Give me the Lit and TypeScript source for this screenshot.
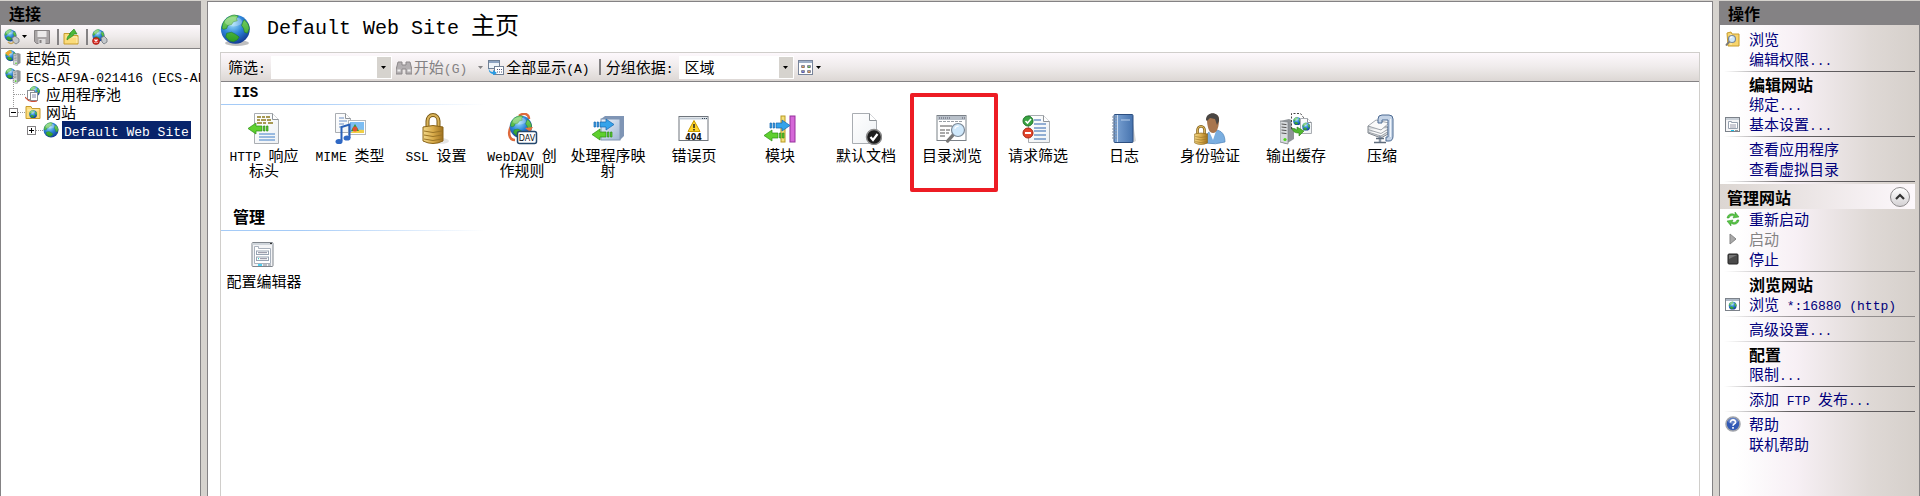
import { LitElement, html, svg, css, TemplateResult, SVGTemplateResult } from "lit";
import { customElement } from "lit/decorators.js";
import { classMap } from "lit/directives/class-map.js";

/** Wraps Latin runs so that they take the half-width face beside full-width characters. */
const mix = (text: string) =>
  text
    .split(/([\x20-\x7e]+)/)
    .filter((s) => s)
    .map((s) => (/^[\x20-\x7e]/.test(s) ? html`<span class="latin">${s}</span>` : s));

const globe = (x: number, y: number, s: number) => svg`
  <g transform="translate(${x} ${y}) scale(${s})">
    <circle cx="16" cy="16" r="15" fill="url(#sea)"/>
    <path d="M3 10C5 5 10 1.500 15 1l4 1-2 3 1 2-4 1-2 3-4 1-1 3-3 1-2-1zM25 6c3 2 5 5 5.500 9l-2 5-3-1-1-4-2-3 1-3zM7 20l5-1 4 2 4 3-2 3-4 2-4-1-4-4z" fill="url(#land)" stroke="#1d7a20" stroke-width=".6"/>
    <ellipse cx="14" cy="8" rx="9" ry="5" fill="#fff" opacity=".28"/>
  </g>`;

const padlock = (x: number, y: number, s: number) => svg`
  <g transform="translate(${x} ${y}) scale(${s})">
    <path d="M5.500 15V8a5.500 6 0 0 1 11 0v7" fill="none" stroke="#7a5a16" stroke-width="4"/>
    <path d="M5.500 15V8a5.500 6 0 0 1 11 0v7" fill="none" stroke="#d9b35a" stroke-width="2"/>
    <path d="M1 14q10-3 20 0v14q-10 5-20 0z" fill="url(#gold)" stroke="#8a6418"/>
    <path d="M2 18q9 3 18 0M2 22q9 3 18 0M2 26q9 3 18 0" fill="none" stroke="#9a7426"/>
  </g>`;

const arrowRight = (x: number, y: number) => svg`
  <path transform="translate(${x} ${y})" d="M0 3h1.500v5H0zM3 3h1.500v5H3zM6 3h6V0l8 5.500-8 5.500V8H6z" fill="#35a3ea" stroke="#1565b0" stroke-width=".7"/>`;
const arrowLeft = (x: number, y: number) => svg`
  <path transform="translate(${x} ${y})" d="M20 3h-1.500v5H20zM17 3h-1.500v5H17zM14 3H8V0L0 5.500 8 11V8h6z" fill="#5fd02f" stroke="#2c8f16" stroke-width=".7"/>`;

const server = (x: number, y: number, s: number) => svg`
  <g transform="translate(${x} ${y}) scale(${s})">
    <path d="M0 2l9-2 5 2v18l-8 5-6-2z" fill="#8f9498"/>
    <path d="M0 2l8 1v22l-8-2z" fill="#d8dbde" stroke="#7d8286" stroke-width=".7"/>
    <path d="M1.500 5l5 .6M1.500 8l5 .6M1.500 11l5 .6M1.500 14l5 .6" stroke="#555"/>
    <circle cx="5" cy="20.500" r="1.600" fill="#4fd51e"/>
  </g>`;

const magnifier = (x: number, y: number, r: number) => svg`
  <path d="M${x - r * 0.7} ${y + r * 0.7}l${-r * 0.9} ${r}" stroke="#777" stroke-width="${r * 0.5}" stroke-linecap="round"/>
  <circle cx="${x}" cy="${y}" r="${r}" fill="#cfe8fb" stroke="#7b8896" stroke-width="1.200"/>
  <path d="M${x - r * 0.5} ${y - r * 0.2}a${r * 0.6} ${r * 0.6} 0 0 1 ${r * 0.6} ${-r * 0.4}" fill="none" stroke="#fff" stroke-width="1.200"/>`;

const page = (x: number, y: number, w: number, h: number, f: number) => svg`
  <path d="M${x} ${y}h${w - f}l${f} ${f}v${h - f}h${-w}z" fill="url(#paper)" stroke="#a9adb2"/>
  <path d="M${x + w - f} ${y}v${f}h${f}" fill="#fff" stroke="#8f9499"/>`;

const icons: Record<string, SVGTemplateResult> = {
  http: svg`${page(6.5, 0.5, 24, 30, 6)}
    <path d="M9 4h4M14 4h3M18 4h4M9 7h3M13 7h5M19 7h4M9 10h5M15 10h3M20 10h5" stroke="#8d7a1c" stroke-width="1.500"/>
    <path d="M11 21h16M11 24h16M11 27h16" stroke="#3f7fc8"/>${arrowLeft(0, 10)}`,
  mime: svg`${page(1.5, 0.5, 15, 19, 5)}
    <path d="M5 5h5M5 8h8M5 11h5M5 14h4" stroke="#6d8fc4"/>
    <rect x="14.500" y="7.500" width="17" height="14" fill="#fff" stroke="#b4b8bc"/>
    <rect x="16" y="9" width="14" height="11" fill="#7dbdf2"/>
    <path d="M16 20c3-3 8-4 14-3v3z" fill="#f0cf46"/><path d="M17 18l4-7 4 7z" fill="#2d9a35"/><circle cx="21" cy="16" r="2.500" fill="#e05030"/>
    <path d="M7.500 28V14l8-2.500V25" fill="none" stroke="#2960b8" stroke-width="2"/>
    <ellipse cx="5" cy="28.500" rx="3.500" ry="2.600" fill="#2f68c4"/><ellipse cx="13" cy="25" rx="3.500" ry="2.600" fill="#2f68c4"/>`,
  ssl: svg`<ellipse cx="21" cy="28" rx="8" ry="3" fill="#000" opacity=".1"/>${padlock(2, 0, 1)}`,
  webdav: svg`<path d="M13 3c5-4 10-2 10 3M6 12c-5 7-3 15 3 15" fill="none" stroke="#de6a3c" stroke-width="2.500"/>${globe(3, 2, 0.74)}
    <path d="M19 15l8-1-3 5z" fill="#e8733c"/>
    <rect x="11.500" y="18.500" width="19" height="12" rx="2" fill="#fff" stroke="#24486e" stroke-width="1.500"/>
    <text x="21" y="28" text-anchor="middle" class="glyph dav">DAV</text>`,
  handler: svg`<path d="M9 6l4-3h19v20l-4 4H9z" fill="#7f95b5"/><rect x="9" y="6" width="19" height="21" fill="url(#steel)" stroke="#8095b3"/>
    ${arrowRight(2, 6)}${arrowLeft(0, 16)}`,
  error: svg`<rect x="1" y="3.500" width="29" height="24" fill="#fff" stroke="#6f757c"/><path d="M1.500 5.500h28" stroke="#c3ccd6" stroke-width="2"/>
    <path d="M24 5.500h1M26 5.500h1M28 5.500h1" stroke="#345"/>
    <path d="M16 7.500l6 11H10z" fill="#ffd42a" stroke="#c99a00" stroke-linejoin="round"/><path d="M16 11v4M16 16v1.500" stroke="#222" stroke-width="1.500"/>
    <text x="15.500" y="26.500" text-anchor="middle" class="glyph code">404</text>`,
  module: svg`<rect x="17" y="3" width="4" height="26" fill="#f5e07a" stroke="#b89a22"/><rect x="26" y="3" width="5" height="26" fill="#d568d8" stroke="#96309c"/>
    ${arrowRight(6, 7)}${arrowLeft(0, 17)}`,
  defdoc: svg`${page(2.5, 0.5, 24, 30, 7)}
    <circle cx="24" cy="24" r="7.500" fill="#1c1c1c" stroke="#8b8b8b" stroke-width="1.500"/><path d="M20.500 24l2.500 3 4.500-6" fill="none" stroke="#fff" stroke-width="2.200"/>`,
  browse: svg`<rect x="1" y="2.500" width="29" height="25" fill="#fff" stroke="#7b8188"/><path d="M1.500 5h28" stroke="#b8c0c9" stroke-width="4"/><path d="M3 5h12M26 5h3" stroke="#556" stroke-dasharray="1 1"/>
    <path d="M3 8.500h24" stroke="#9aa0a6" stroke-dasharray="3 1"/><path d="M4 13h12M4 17h5M10 17h4M4 20h5M10 20h3M4 23h5" stroke="#555"/>${magnifier(22, 17, 6.5)}`,
  filter: svg`${page(6.5, 2.5, 21, 27, 6)}
    <path d="M12 7h7M12 11h12M12 15h12M12 18h12M12 22h12M12 26h12" stroke="#2f65ad" stroke-width="1.200"/>
    <circle cx="6" cy="8" r="5" fill="#39a342" stroke="#21752a"/><path d="M3.500 8l2 2 3.500-4" stroke="#fff" stroke-width="1.600" fill="none"/>
    <circle cx="6" cy="20" r="5" fill="#e2452c" stroke="#a92612"/><path d="M3 20h6" stroke="#fff" stroke-width="2"/>`,
  log: svg`<path d="M24 4l4 24-4 2z" fill="#000" opacity=".15"/><rect x="6" y="1.500" width="19" height="28" rx="1" fill="url(#book)" stroke="#2d4f80"/>
    <path d="M9.500 2v27" stroke="#c9dbf1"/><path d="M4 4h5M4 7h5M4 10h5M4 13h5M4 16h5M4 19h5M4 22h5M4 25h5" stroke="#7f8fa5"/>
    <path d="M13 7h9" stroke="#b8cfec"/>`,
  auth: svg`<path d="M11 30c0-9 4-13 10-13 7 0 10 5 10 12q-9 3-20 1z" fill="#7aaee0" stroke="#4d83b9" stroke-width=".7"/><path d="M15 18l4 9 3-9z" fill="#fff"/>
    <path d="M13 6c0-7 12-7 12 0 0 8-2 14-6 14s-6-6-6-14z" fill="#a8754d"/><path d="M12 7c0-9 14-9 13 1l-2 4-2-6-5-1-3 3z" fill="#4a4643"/>${padlock(0, 12, 0.64)}`,
  cache: svg`${server(0, 6, 1)}<path d="M11.500 16V.5h9l3 4V16z" fill="#fff" stroke="#444" stroke-dasharray="2 1.500"/>
    ${globe(13, 4, 0.26)}${page(20.5, 5.5, 11, 15, 4)}${globe(22, 9.500, 0.26)}<path d="M12 15l5 2v-3l7 4-5 5v-3c-4 0-6-1-7-5z" fill="#50b82f" stroke="#2a7d17" stroke-width=".6"/>`,
  compress: svg`<path d="M2 13v7l13 5 7-4v-7z" fill="#d9dcdf" stroke="#7f858c"/><path d="M2 13l8-6 13 3-8 7zM2 16.500l13 4 8-5M2 19l13 4 8-5" fill="#fafafa" stroke="#8c9299" stroke-width=".8"/>
    <path d="M12 10V6q0-4 4-4h7q4 0 4 4v17q0 5-4 5h-3v-4h2V7h-6v3z" fill="#c4d3e6" stroke="#4c6a92"/>
    <path d="M24.500 6v18" stroke="#f1f6fc"/><path d="M14 23v6" stroke="#8d9aab" stroke-width="2.500"/><path d="M8 29.500h12M10 25.500h8" stroke="#5f6c7c" stroke-width="1.500"/>`,
  config: svg`<g transform="translate(-2 0)"><rect x="6" y="3.500" width="21" height="24" rx="1" fill="#f3f4f6" stroke="#7f858c"/><path d="M6.500 5h20" stroke="#cfd5db" stroke-width="2"/><path d="M24 4.500h2" stroke="#333"/>
    <path d="M8.500 24.500v-17h4v2h12v15z" fill="#fff" stroke="#a9b1bc"/><rect x="10.500" y="12" width="12" height="3.500" fill="#fff" stroke="#97a3b2"/>
    <rect x="10.500" y="18" width="12" height="3.500" fill="#fff" stroke="#97a3b2"/><path d="M12 13.700h9M14 19.700h7" stroke="#889"/><path d="M12 19.700h1" stroke="#1bb"/>
    <path d="M12 26h4" stroke="#19c3ec" stroke-width="1.500"/><path d="M17 26h4M22 26h3" stroke="#a5abb2" stroke-width="1.500"/></g>`,
};

const small: Record<string, SVGTemplateResult> = {
  connect: svg`${globe(0, 0, 0.4)}<path d="M8 9l3-2 4 3v3l-3 2-3-2z" fill="#c4c8cc" stroke="#6f757b" stroke-width=".8"/><path d="M4 13q3 3 6 0" fill="none" stroke="#c2a35a" stroke-width="1.500"/>`,
  save: svg`<path d="M.5 1.500h15v13h-13l-2-2z" fill="#a9a5a6" stroke="#858182"/><rect x="3.500" y="2" width="9" height="6" fill="#eceaea"/><rect x="4.500" y="10" width="7" height="5" fill="#dedcdc"/><rect x="5.500" y="11" width="2" height="3" fill="#858182"/>`,
  up: svg`<path d="M1 4.500h5l1 2h8v8.500H1z" fill="#fbdc7b" stroke="#c79c2e"/><path d="M3 8h11v6" fill="none" stroke="#fff0bb"/><path d="M4 11c0-4 2-5 4-6H6l5-5 3 5h-3c-1 3-4 3-7 6z" fill="#4cb93a" stroke="#24811a" stroke-width=".6"/>`,
  disconnect: svg`${globe(0, 0, 0.4)}<path d="M9 9l3-2 3 3v3l-3 2-2-2z" fill="#c4c8cc" stroke="#6f757b" stroke-width=".8"/><circle cx="4" cy="12" r="3.500" fill="#d92c23" stroke="#931008" stroke-width=".6"/><path d="M2.500 10.500l3 3M5.500 10.500l-3 3" stroke="#fff" stroke-width="1.200"/>`,
  start: svg`${globe(0, 0, 0.36)}<path d="M0 3l5-3 2 3-3 1 1 3z" fill="#f0a92e"/>${server(8.5, 3, 0.5)}`,
  host: svg`${globe(0, 0, 0.36)}${server(8, 2, 0.54)}`,
  pools: svg`${globe(4, 0, 0.35)}<rect x="2.500" y="4.500" width="7" height="9" fill="#fff" stroke="#8c8f94"/><rect x="5.500" y="6.500" width="7" height="8" fill="#fff" stroke="#8c8f94"/><path d="M0 11q4 6 12 4" fill="none" stroke="#cf5136" stroke-width="1.200"/><path d="M7 9h4M7 11h4" stroke="#88a"/>`,
  sites: svg`<path d="M1 2.500h5l1 2h8v10H1z" fill="#fbdc7b" stroke="#c79c2e"/><path d="M2.500 6h11" stroke="#fff0bb"/>${globe(4, 6, 0.26)}`,
  site: svg`${globe(0, 0, 0.5)}`,
  find: svg`<path d="M2 3h4v3h4V3h4l2 8v4h-6v-5H6v5H0v-4z" fill="#b3afb1" stroke="#8b8789"/><path d="M1.500 11.500h3M11.500 11.500h3" stroke="#eee" stroke-width="2"/>`,
  showall: svg`<rect x=".5" y="1.500" width="11" height="8" fill="#eef3f8" stroke="#718095"/><path d="M1 3h10" stroke="#8da3c1" stroke-width="2"/><rect x="6.500" y="7.500" width="9" height="8" fill="#fff" stroke="#718095"/><path d="M9 10.500h5M9 13h5" stroke="#557" stroke-dasharray="1 1"/><path d="M1 9c0 3 2 4 4 4v-2l4 3-4 2.500V15C2 15 0 12 1 9z" fill="#2b9be2"/>`,
  view: svg`<rect x=".5" y="1.500" width="14" height="14" fill="#fff" stroke="#78849a"/><path d="M1 3h13" stroke="#9fb0c8" stroke-width="2"/><path d="M3.500 6.500h3v2h-3zM9.500 6.500h3v2h-3zM3.500 11.500h3v2h-3zM9.500 11.500h3v2h-3z" fill="#cde" stroke="#889"/><path d="M4 8h2M10 13h2" stroke="#c60"/><path d="M10 8h2" stroke="#390"/><path d="M4 13h2" stroke="#33b"/>`,
  explore: svg`<path d="M2 2l4-1 1 2h7v12H3z" fill="#f8d56d" stroke="#c79c2e"/><path d="M6 3v11" stroke="#fff0bb"/>${magnifier(7, 8, 3.5)}`,
  settings: svg`<rect x=".5" y="1.500" width="14" height="14" fill="#f6f6f8" stroke="#7c828a"/><path d="M1 3h13" stroke="#c9d0d8" stroke-width="2"/><path d="M3.500 12.500v-7h3v1h6v6z" fill="#fff" stroke="#98a2b0"/><path d="M5 9h6M5 11h6" stroke="#99a"/><path d="M6 14.500h3" stroke="#19c3ec"/><path d="M10 14.500h3" stroke="#999"/>`,
  restart: svg`<path d="M2 7c1-5 6-5 8-3V1l4 5-6 1 1-2C6 4 5 5 4 7zM14 9c-1 5-6 5-8 3v3L2 10l6-1-1 2c3 1 4 0 5-2z" fill="#57c444" stroke="#2f9424" stroke-width=".5"/>`,
  play: svg`<path d="M5 3l6 5-6 5z" fill="#a9a9a9" stroke="#858585"/>`,
  stop: svg`<rect x="3" y="3" width="10" height="10" rx="1" fill="#4a4a4a" stroke="#222"/><path d="M4 8V4h8z" fill="#777"/>`,
  web: svg`<rect x=".5" y="2.500" width="14" height="12" fill="#fff" stroke="#7c828a"/><path d="M1 4h13" stroke="#aeb9c6" stroke-width="2"/>${globe(3.500, 5.500, 0.26)}`,
  help: svg`<circle cx="8" cy="8" r="7" fill="#3159b5" stroke="#a2a5ab" stroke-width="1.600"/><ellipse cx="8" cy="5" rx="5" ry="3" fill="#fff" opacity=".25"/><path d="M5.500 6.500c0-4 5.500-3 5 0-.3 1.500-2.500 1.500-2.500 3.300M8 11v1.800" fill="none" stroke="#fff" stroke-width="1.600"/>`,
};

const icon = (name: string): TemplateResult =>
  html`<svg class="icon" viewBox="0 0 16 16" aria-hidden="true">${small[name]}</svg>`;
const caret = html`<svg class="caret" viewBox="0 0 5 3" aria-hidden="true"><path d="M0 0h5L2.500 3z" fill="currentColor"/></svg>`;

interface Feature { label: string; icon: string; marked?: boolean }
const groups: { title: string; items: Feature[] }[] = [
  {
    title: "IIS",
    items: [
      { label: "HTTP 响应标头", icon: "http" },
      { label: "MIME 类型", icon: "mime" },
      { label: "SSL 设置", icon: "ssl" },
      { label: "WebDAV 创作规则", icon: "webdav" },
      { label: "处理程序映射", icon: "handler" },
      { label: "错误页", icon: "error" },
      { label: "模块", icon: "module" },
      { label: "默认文档", icon: "defdoc" },
      { label: "目录浏览", icon: "browse", marked: true },
      { label: "请求筛选", icon: "filter" },
      { label: "日志", icon: "log" },
      { label: "身份验证", icon: "auth" },
      { label: "输出缓存", icon: "cache" },
      { label: "压缩", icon: "compress" },
    ],
  },
  { title: "管理", items: [{ label: "配置编辑器", icon: "config" }] },
];

type Action =
  | { kind: "link"; label: string; icon?: string; disabled?: boolean }
  | { kind: "title"; label: string }
  | { kind: "section"; label: string }
  | { kind: "rule"; light?: boolean };
const link = (label: string, iconName?: string, disabled = false): Action => ({ kind: "link", label, icon: iconName, disabled });
const title = (label: string): Action => ({ kind: "title", label });
const rule = (light = false): Action => ({ kind: "rule", light });

const actions: Action[] = [
  link("浏览", "explore"),
  link("编辑权限..."),
  rule(),
  title("编辑网站"),
  link("绑定..."),
  link("基本设置...", "settings"),
  rule(),
  link("查看应用程序"),
  link("查看虚拟目录"),
  rule(),
  { kind: "section", label: "管理网站" },
  link("重新启动", "restart"),
  link("启动", "play", true),
  link("停止", "stop"),
  rule(true),
  title("浏览网站"),
  link("浏览 *:16880 (http)", "web"),
  rule(true),
  link("高级设置..."),
  rule(true),
  title("配置"),
  link("限制..."),
  rule(),
  link("添加 FTP 发布..."),
  rule(),
  link("帮助", "help"),
  link("联机帮助"),
];

@customElement("app-root")
export class AppRoot extends LitElement {
  static styles = css`
    :host {
      display: block;
      --edge: #848284;
      --face: #d6d3ce;
      color: #000;
      font: 15px/18px "Noto Sans CJK SC", sans-serif;
    }
    * { box-sizing: border-box; }
    .latin { font-family: "Liberation Mono", "Noto Sans CJK SC", monospace; font-size: 13px; line-height: 0; }
    .defs { position: absolute; width: 0; height: 0; }
    .glyph { font-family: "DejaVu Sans", sans-serif; fill: #111; }
    .dav { font-size: 8px; }
    .code { font-size: 8px; font-weight: bold; }
    button, input, select { font: inherit; color: inherit; border: 0; padding: 0; margin: 0; background: none; border-radius: 0; }
    .icon { width: 16px; height: 16px; flex: none; display: block; }
    .caret { width: 5px; height: 3px; flex: none; display: block; }

    .window { display: flex; gap: 6px; height: 100vh; padding-top: 1px; background: var(--face); overflow: hidden; }
    .pane { width: 201px; flex: none; display: flex; flex-direction: column; border: 1px solid var(--edge); border-top: 0; border-bottom: 0; background: #fff; overflow: hidden; }
    .pane-title { margin: 0; height: 24px; padding: 0 8px; background: var(--edge); font-size: 16px; line-height: 24px; font-weight: bold; flex: none; }

    .bar { background: linear-gradient(#fdf8fc, #efebeb 50%, #dcd7d4); display: flex; align-items: center; }
    .conn-tools { height: 24px; padding: 0 3px; border-bottom: 1px solid var(--edge); flex: none; }
    .tool { display: flex; align-items: center; gap: 2px; white-space: nowrap; }
    .tool:disabled { color: #848284; }
    .split { width: 2px; height: 16px; background: var(--edge); }
    .conn-tools .split { margin: 0 4px 0 7px; }
    .conn-tools .save { margin-left: 7px; }

    .tree, .branch { list-style: none; margin: 0; padding: 0; }
    .node { display: flex; align-items: center; height: 18px; white-space: nowrap; padding-left: 4px; }
    .node .label { padding: 0 2px; margin-left: 3px; }
    .lvl1 { padding-left: 24px; position: relative; }
    .lvl1::before { content: ""; position: absolute; left: 12px; top: -9px; width: 11px; height: 18px; border: 1px dotted #999; border-top: 0; border-right: 0; }
    .lvl1.open { padding-left: 8px; }
    .lvl2 { padding-left: 26px; }
    .selected .label { background: #08246b; color: #fff; }
    .toggle { width: 9px; height: 9px; border: 1px solid #848284; background: #fff; flex: none; position: relative; display: grid; place-items: center; }
    .toggle svg { width: 5px; height: 5px; display: block; }
    .dots { width: 7px; border-top: 1px dotted #999; flex: none; }

    .main { flex: 1; min-width: 0; display: flex; flex-direction: column; padding: 12px 12px 0; border: 1px solid var(--edge); border-bottom: 0; background: #fff; }
    .heading { display: flex; align-items: flex-start; gap: 15px; height: 32px; margin: 0 0 6px; font-size: 24px; line-height: 20px; font-weight: normal; }
    .heading svg { width: 32px; height: 32px; }
    .heading .latin { font-size: 20px; }
    .frame { flex: 1; border: 1px solid #d0cecb; border-bottom: 0; }
    .filter-bar { height: 29px; padding: 0 7px; border-bottom: 1px solid var(--edge); white-space: nowrap; }
    .combo { display: grid; grid-template-columns: minmax(0, 1fr) 14px; width: 121px; height: 23px; padding: 1px; background: #fff; margin-left: 5px; }
    .combo.choice { width: 115px; }
    .combo input { grid-area: 1 / 1; min-width: 0; }
    .combo select { grid-area: 1 / 1 / 2 / 3; appearance: none; padding-left: 5px; width: 100%; line-height: 18px; }
    .drop { grid-area: 1 / 2; background: var(--face); display: grid; place-items: center; pointer-events: none; }
    button.drop { pointer-events: auto; }
    .filter-bar .go { margin-left: 4px; }
    .filter-bar .go .caret { margin-left: 9px; }
    .filter-bar .all { margin-left: 5px; }
    .filter-bar .split { margin: 0 5px 0 9px; }
    .filter-bar .view { margin-left: 4px; }

    .group-title { margin: 0; padding: 0 12px 6px; font-size: 16px; line-height: 16px; font-weight: bold; }
    .group-title .latin { font-size: 14px; }
    .group-line { height: 1px; background: linear-gradient(to right, #a5cbf7, #a5cbf7 80px, transparent 265px); }
    .features { display: grid; grid-template-columns: repeat(auto-fill, 86px); margin: 0 0 31px; padding: 8px 0 0; list-style: none; }
    .feature { position: relative; }
    .feature button { width: 100%; padding: 0 4px; display: flex; flex-direction: column; align-items: center; gap: 2px; line-height: 15px; text-align: center; }
    .feature svg { width: 32px; height: 32px; display: block; }
    .marker { position: absolute; inset: -20px -3px -15px 1px; border: 4px solid #ed1c24; border-radius: 2px; pointer-events: none; }

    .actions { flex: 1; padding-right: 4px; background: linear-gradient(to right, #fff 8%, #f7f0f5 38%, #dfd9d6 75%, #d5cfca); }
    .action-list { list-style: none; margin: 0; padding: 4px 0 0; }
    .action { display: grid; grid-template-columns: 16px minmax(0, 1fr); gap: 8px; padding-left: 5px; height: 20px; line-height: 20px; align-items: center; white-space: nowrap; color: #00007b; }
    .action a { grid-column: 2; color: inherit; text-decoration: none; }
    .action .icon { grid-row: 1; }
    .action.off { color: #848284; }
    .action.head { color: #000; font-size: 16px; font-weight: bold; }
    .head span { grid-column: 2; }
    .rule { height: 5px; padding: 2px 0 0 4px; }
    .rule hr { height: 1px; margin: 0; border: 0; background: linear-gradient(to right, transparent, #5f5c5e 35%); }
    .rule.light hr { opacity: 0.6; }
    .section { display: flex; align-items: center; justify-content: space-between; height: 25px; padding: 0 5px 0 7px; font-size: 16px; font-weight: bold; background: linear-gradient(to right, #dcd6d2, #ebe5e5 45%, #fdf8fc); }
    .section button { width: 20px; height: 20px; border: 1px solid #8f8c8e; border-radius: 50%; background: linear-gradient(#fff, #d4d1d4); display: grid; place-items: center; }
    .section svg { width: 10px; height: 7px; display: block; }
  `;

  private defs() {
    return html`<svg class="defs" aria-hidden="true"><defs>
      <radialGradient id="sea" cx=".4" cy=".3" r=".75"><stop offset="0" stop-color="#9fe0fb"/><stop offset=".5" stop-color="#2c83d8"/><stop offset="1" stop-color="#11358f"/></radialGradient>
      <linearGradient id="land" x1="0" y1="0" x2="0" y2="1"><stop offset="0" stop-color="#7ed66c"/><stop offset="1" stop-color="#2c9c22"/></linearGradient>
      <linearGradient id="gold"><stop offset="0" stop-color="#f3d98b"/><stop offset=".5" stop-color="#d9ac4b"/><stop offset="1" stop-color="#a2731f"/></linearGradient>
      <linearGradient id="paper" x1="0" y1="0" x2="1" y2="1"><stop offset="0" stop-color="#fff"/><stop offset="1" stop-color="#eef1f4"/></linearGradient>
      <linearGradient id="steel" x1="0" y1="0" x2="1" y2="1"><stop offset="0" stop-color="#eef4fb"/><stop offset="1" stop-color="#9db4d2"/></linearGradient>
      <linearGradient id="book"><stop offset="0" stop-color="#7fa6d6"/><stop offset="1" stop-color="#4673ae"/></linearGradient>
    </defs></svg>`;
  }

  private connections() {
    return html`<nav class="pane" aria-label="连接">
      <h2 class="pane-title">连接</h2>
      <div class="bar conn-tools">
        <button class="tool" aria-label="连接">${icon("connect")}${caret}</button>
        <button class="tool save" aria-label="保存" disabled>${icon("save")}</button>
        <span class="split"></span>
        <button class="tool" aria-label="向上">${icon("up")}</button>
        <span class="split"></span>
        <button class="tool" aria-label="断开">${icon("disconnect")}</button>
      </div>
      <ul class="tree">
        <li><div class="node">${icon("start")}<span class="label">起始页</span></div></li>
        <li>
          <div class="node">${icon("host")}<span class="label">${mix("ECS-AF9A-021416 (ECS-AF9A-021416)")}</span></div>
          <ul class="branch">
            <li><div class="node lvl1">${icon("pools")}<span class="label">应用程序池</span></div></li>
            <li>
              <div class="node lvl1 open">
                <button class="toggle" aria-label="折叠"><svg viewBox="0 0 5 5"><path d="M0 2.500h5" stroke="#000"/></svg></button>
                <span class="dots"></span>${icon("sites")}<span class="label">网站</span>
              </div>
              <ul class="branch">
                <li>
                  <div class="node lvl2 selected">
                    <button class="toggle" aria-label="展开"><svg viewBox="0 0 5 5"><path d="M0 2.500h5M2.500 0v5" stroke="#000"/></svg></button>
                    <span class="dots"></span>${icon("site")}<span class="label">${mix("Default Web Site")}</span>
                  </div>
                </li>
              </ul>
            </li>
          </ul>
        </li>
      </ul>
    </nav>`;
  }

  private filterBar() {
    return html`<div class="bar filter-bar">
      <label for="filter">${mix("筛选:")}</label>
      <span class="combo"><input id="filter" type="text" /><button class="drop" aria-label="筛选">${caret}</button></span>
      <button class="tool go" disabled>${icon("find")}<span>${mix("开始(G)")}</span>${caret}</button>
      <button class="tool all">${icon("showall")}<span>${mix("全部显示(A)")}</span></button>
      <span class="split"></span>
      <label for="grouping">${mix("分组依据:")}</label>
      <span class="combo choice"><select id="grouping"><option>区域</option></select><span class="drop">${caret}</span></span>
      <button class="tool view" aria-label="视图">${icon("view")}${caret}</button>
    </div>`;
  }

  private feature(f: Feature) {
    return html`<li class="feature">
      <button><svg viewBox="0 0 32 32" fill="none" aria-hidden="true">${icons[f.icon]}</svg><span>${mix(f.label)}</span></button>
      ${f.marked ? html`<span class="marker"></span>` : null}
    </li>`;
  }

  private action(a: Action) {
    switch (a.kind) {
      case "rule":
        return html`<li class=${classMap({ rule: true, light: !!a.light })}><hr /></li>`;
      case "title":
        return html`<li class="action head"><span>${a.label}</span></li>`;
      case "section":
        return html`<li class="section"><span>${a.label}</span>
          <button aria-label="折叠"><svg viewBox="0 0 10 7"><path d="M1 6l4-4 4 4" fill="none" stroke="#333" stroke-width="2.200"/></svg></button></li>`;
      default:
        return html`<li class=${classMap({ action: true, off: !!a.disabled })}>
          ${a.icon ? icon(a.icon) : null}<a href="#">${mix(a.label)}</a></li>`;
    }
  }

  render() {
    return html`${this.defs()}
      <div class="window">
        ${this.connections()}
        <main class="main">
          <h1 class="heading"><svg viewBox="0 0 32 32" aria-hidden="true"><ellipse cx="17" cy="29" rx="12" ry="3" fill="#000" opacity=".25"/>${globe(0, 0, 0.96)}</svg><span>${mix("Default Web Site 主页")}</span></h1>
          <div class="frame">
            ${this.filterBar()}
            ${groups.map((g) => html`<section>
              <h2 class="group-title">${mix(g.title)}</h2><div class="group-line"></div>
              <ul class="features">${g.items.map((f) => this.feature(f))}</ul>
            </section>`)}
          </div>
        </main>
        <aside class="pane" aria-label="操作">
          <h2 class="pane-title">操作</h2>
          <div class="actions"><ul class="action-list">${actions.map((a) => this.action(a))}</ul></div>
        </aside>
      </div>`;
  }
}
